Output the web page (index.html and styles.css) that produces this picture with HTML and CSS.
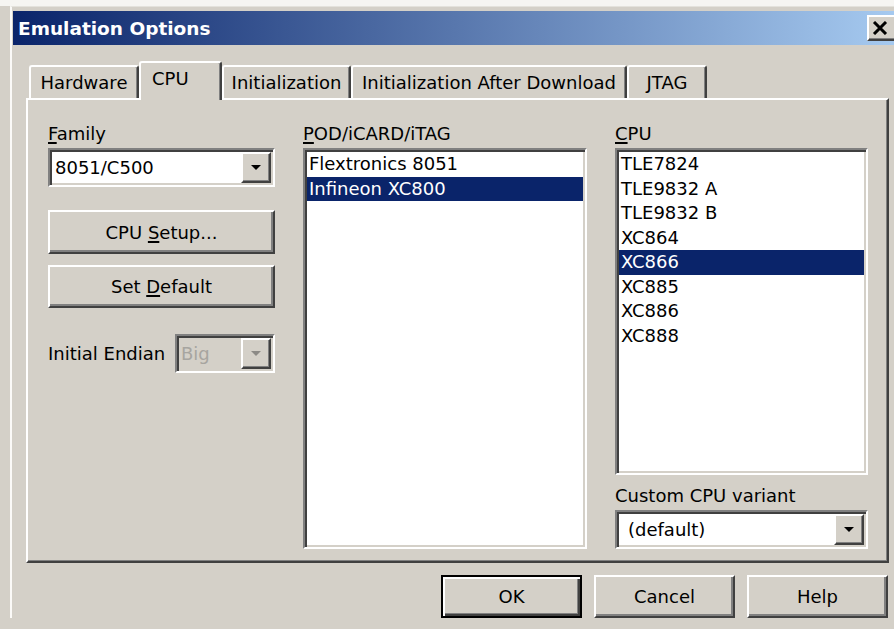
FILE: index.html
```html
<!DOCTYPE html>
<html lang="en">
<head>
<meta charset="utf-8">
<title>Emulation Options</title>
<link rel="stylesheet" href="styles.css">
</head>
<body>
<div class="frame">
  <div class="titlebar">
    <span class="title">Emulation Options</span>
    <div class="close">
      <svg width="16" height="14" viewBox="0 0 16 14"><path d="M2 1 L14 13 M14 1 L2 13" stroke="#000" stroke-width="3" fill="none"/></svg>
    </div>
  </div>

  <div class="tabstrip">
    <div class="tab tab-hw">Hardware</div>
    <div class="tab tab-cpu active">CPU</div>
    <div class="tab tab-init">Initialization</div>
    <div class="tab tab-iad">Initialization After Download</div>
    <div class="tab tab-jtag">JTAG</div>
  </div>

  <div class="panel">
    <div class="col col-family">
      <div class="label"><u>F</u>amily</div>
      <div class="combo">
        <span class="value">8051/C500</span>
        <span class="drop"><i class="arrow"></i></span>
      </div>
      <div class="btn btn-setup"><span>CPU <u>S</u>etup...</span></div>
      <div class="btn btn-default"><span>Set <u>D</u>efault</span></div>
      <div class="endian-row">
        <span class="label">Initial Endian</span>
        <div class="combo combo-disabled">
          <span class="value">Big</span>
          <span class="drop"><i class="arrow"></i></span>
        </div>
      </div>
    </div>

    <div class="col col-pod">
      <div class="label"><u>P</u>OD/iCARD/iTAG</div>
      <ul class="listbox list-pod">
        <li>Flextronics 8051</li>
        <li class="sel">Infineon XC800</li>
      </ul>
    </div>

    <div class="col col-cpu">
      <div class="label"><u>C</u>PU</div>
      <ul class="listbox list-cpu">
        <li>TLE7824</li>
        <li>TLE9832 A</li>
        <li>TLE9832 B</li>
        <li>XC864</li>
        <li class="sel">XC866</li>
        <li>XC885</li>
        <li>XC886</li>
        <li>XC888</li>
      </ul>
      <div class="label label-variant">Custom CPU variant</div>
      <div class="combo">
        <span class="value value-variant">(default)</span>
        <span class="drop"><i class="arrow"></i></span>
      </div>
    </div>
  </div>

  <div class="buttons">
    <div class="btn btn-dlg btn-ok"><span>OK</span></div>
    <div class="btn btn-dlg"><span>Cancel</span></div>
    <div class="btn btn-dlg"><span>Help</span></div>
  </div>
</div>
</body>
</html>
```

FILE: styles.css
```css
* { box-sizing: border-box; }

body {
  margin: 0;
  width: 894px;
  height: 629px;
  overflow: hidden;
  background: linear-gradient(#f6f5f2 0 6px, #d4d0c8 6px);
  font-family: "DejaVu Sans", "Verdana", sans-serif;
  font-size: 18px;
  color: #000;
}

u { text-decoration-thickness: 1.5px; text-underline-offset: 2px; }

/* window frame */
.frame {
  margin: 6px 0 0 10px;
  border-top: 1px solid #e4e2dc;
  border-left: 2px solid #fbfaf8;
  padding: 4px 0 0 1px;
}

/* caption */
.titlebar {
  display: flex;
  align-items: center;
  justify-content: space-between;
  height: 34px;
  margin-right: -3px;
  background: linear-gradient(to right, #0a246a, #a6caf0);
}
.title {
  color: #fff;
  font-weight: bold;
  font-size: 18.5px;
  padding-left: 5px;
}
.close {
  width: 30px;
  height: 26px;
  background: #d4d0c8;
  border: 2px solid;
  border-color: #fff #404040 #404040 #fff;
  box-shadow: inset -1px -1px 0 #808080;
  display: flex;
  align-items: center;
  justify-content: center;
  padding-right: 4px;
}
.close svg { display: block; }

/* tabs */
.tabstrip {
  position: relative;
  z-index: 1;
  display: flex;
  align-items: flex-end;
  height: 37px;
  margin-top: 16px;
  padding-left: 16px;
}
.tab {
  height: 33px;
  padding-top: 5px;
  line-height: 21px;
  text-align: center;
  white-space: nowrap;
  background: #d4d0c8;
  border-top: 2px solid #fff;
  border-left: 2px solid #fff;
  border-right: 2px solid #404040;
  box-shadow: inset -1px 0 0 #808080;
  border-radius: 3px 3px 0 0;
}
.tab-hw { width: 110px; }
.tab-cpu { width: 83px; }
.tab-init { width: 129px; }
.tab-iad { width: 276px; }
.tab-jtag { width: 80px; }
.tab.active {
  height: 39px;
  margin-bottom: -2px;
  padding-top: 5px;
  padding-left: 11px;
  text-align: left;
}

/* tab page */
.panel {
  display: flex;
  gap: 28px;
  width: 863px;
  height: 465px;
  margin-left: 13px;
  padding: 23px 0 0 20px;
  border: 2px solid;
  border-color: #fff #404040 #404040 #fff;
  box-shadow: inset -1px -1px 0 #808080;
}
.col { display: flex; flex-direction: column; }
.col-family { width: 227px; }
.col-pod { width: 284px; }
.col-cpu { width: 253px; }

.label { line-height: 21px; white-space: nowrap; }
.col > .label:first-child { margin-bottom: 4px; }

/* combo box */
.combo {
  display: flex;
  align-items: center;
  height: 39px;
  background: #fff;
  border: 2px solid;
  border-color: #808080 #fff #fff #808080;
  box-shadow: inset 2px 2px 0 #404040, inset -2px -2px 0 #d4d0c8;
  padding: 2px;
}
.combo .value {
  flex: 1;
  padding-left: 3px;
  line-height: 31px;
  white-space: nowrap;
}
.combo .value-variant { padding-left: 9px; }
.drop {
  width: 30px;
  height: 31px;
  display: flex;
  align-items: center;
  justify-content: center;
  background: #d4d0c8;
  border: 2px solid;
  border-color: #fff #404040 #404040 #fff;
  box-shadow: inset -1px -1px 0 #808080;
}
.arrow {
  width: 0;
  height: 0;
  border-left: 5px solid transparent;
  border-right: 5px solid transparent;
  border-top: 5px solid #000;
}
.combo-disabled { background: #d4d0c8; width: 100px; }
.combo-disabled .value { color: #a7a5a0; padding-left: 2px; }
.combo-disabled .arrow { border-top-color: #8c8a86; }

/* push buttons */
.btn {
  display: flex;
  align-items: center;
  justify-content: center;
  white-space: nowrap;
  background: #d4d0c8;
  border: 2px solid;
  border-color: #fff #404040 #404040 #fff;
  box-shadow: inset -2px -2px 0 #808080;
}
.btn-setup { height: 44px; margin-top: 23px; }
.btn-default { height: 43px; margin-top: 11px; }

.endian-row {
  display: flex;
  align-items: center;
  justify-content: space-between;
  margin-top: 26px;
}

/* list boxes */
.listbox {
  list-style: none;
  margin: 0;
  background: #fff;
  border: 2px solid;
  border-color: #808080 #fff #fff #808080;
  box-shadow: inset 2px 2px 0 #404040, inset -2px -2px 0 #d4d0c8;
  padding: 2px;
}
.listbox li {
  height: 24.5px;
  line-height: 24.5px;
  padding-left: 2px;
  white-space: nowrap;
}
.listbox li.sel { background: #0a246a; color: #fff; }
.list-pod { height: 401px; }
.list-cpu { height: 327px; }
.label-variant { margin-top: 10px; margin-bottom: 4px; }

/* dialog buttons */
.buttons {
  display: flex;
  justify-content: flex-end;
  gap: 12px;
  margin-top: 12px;
  padding-right: 6px;
}
.btn-dlg { width: 141px; height: 43px; }
.btn-ok {
  border: 2px solid #000;
  box-shadow: inset 2px 2px 0 #fff, inset -2px -2px 0 #404040, inset -3px -3px 0 #808080;
}
```
